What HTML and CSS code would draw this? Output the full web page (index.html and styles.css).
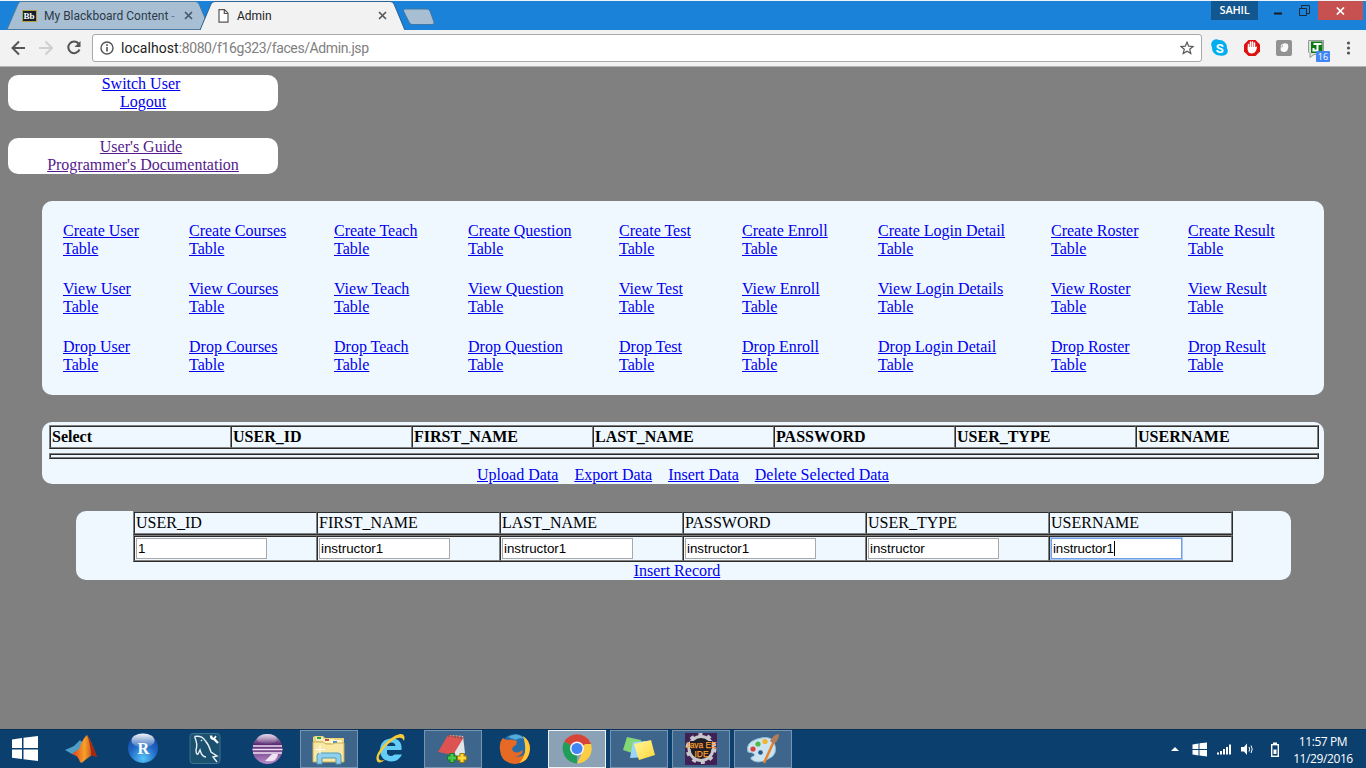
FILE: index.html
```html
<!DOCTYPE html>
<html lang="en">
<head>
<meta charset="utf-8">
<title>Admin</title>
<link rel="stylesheet" href="styles.css">
</head>
<body>
<header class="titlebar">
  <div class="tab tab-back">
    <svg class="tab-shape" width="200" height="29"><path d="M0 28.5 L11 3 Q12 .5 14 .5 H188 Q191 .5 192 3 L200 22 V28.5Z" fill="#a8bfd3" stroke="#4b7ba3"/></svg>
    <svg class="bb" width="15" height="12"><rect x=".5" y=".5" width="14" height="11" fill="#14202b" stroke="#b89d3e"/><text x="1.500" y="9" font-size="9" font-weight="700" font-family="Liberation Serif" fill="#fff">Bb</text></svg>
    <span class="tab-text">My Blackboard Content <i>-</i></span>
    <svg class="tab-x" width="9" height="9"><path d="M1 1 8 8M8 1 1 8" stroke="#46586a" stroke-width="1.7"/></svg>
  </div>
  <div class="tab tab-front">
    <svg class="tab-shape" width="206" height="30"><path d="M0 30 L11 3 Q12 .5 15 .5 H190 Q193 .5 194 3 L204 28 L206 30Z" fill="#f2f2f2"/><path d="M0 29 L11 3 Q12 .5 15 .5 H190 Q193 .5 194 3 L205 29" fill="none" stroke="#2d6597"/></svg>
    <svg class="doc" width="11" height="14"><path d="M1 .7H6.5L10 4.2V13.2H1ZM6.3 .7V4.5H10" fill="#fff" stroke="#555" stroke-width="1.2"/></svg>
    <span class="tab-text">Admin</span>
    <svg class="tab-x" width="9" height="9"><path d="M1 1 8 8M8 1 1 8" stroke="#5a5a5a" stroke-width="1.7"/></svg>
  </div>
  <svg class="newtab" width="34" height="18"><path d="M3 1H25Q27 1 28 3L32 14Q33 16.5 30 16.5H10Q8 16.5 7 14L1.500 3Q1 1 3 1Z" fill="#a8bfd3" stroke="#3d76a8"/></svg>
  <div class="winctl">
    <span class="profile">SAHIL</span>
    <svg class="min" width="9" height="3"><path d="M0 1.500H8" stroke="#1b1b1b" stroke-width="2"/></svg>
    <svg class="restore" width="11" height="11"><path d="M.5 3.500H7.500V10.500H.5ZM2.500 3V.5H10.500V8.500H8" fill="none" stroke="#1b2a38"/></svg>
    <span class="close"><svg width="9" height="8"><path d="M.8 .5 8 7.500M8 .5 .8 7.500" stroke="#fff" stroke-width="1.7"/></svg></span>
  </div>
</header>
<div class="toolbar">
  <svg class="nav" width="80" height="20"><g fill="none" stroke-width="2"><path d="M15 10H3M9 3.500 2.500 10 9 16.500" stroke="#555"/><path d="M29 10H41M35.500 3.500 42 10 35.500 16.500" stroke="#cfcfcf"/><path d="M68.500 5.500A5.800 5.800 0 1 0 69.500 11.500" stroke="#555"/></g><path d="M70.500 3V9H64.500Z" fill="#555"/></svg>
  <div class="address">
    <svg width="14" height="14"><circle cx="7" cy="7" r="6" fill="none" stroke="#555" stroke-width="1.400"/><path d="M7 6V10.500M7 3.300V5" stroke="#555" stroke-width="1.600"/></svg>
    <span class="url"><b>localhost</b>:8080/f16g323/faces/Admin.jsp</span>
    <svg class="star" width="14" height="14"><path d="M7 1.200 8.700 5.200 13 5.500 9.700 8.300 10.800 12.600 7 10.300 3.200 12.600 4.300 8.300 1 5.500 5.300 5.200Z" fill="none" stroke="#555" stroke-width="1.200"/></svg>
  </div>
  <svg class="ext" width="154" height="26">
    <path d="M3 5.500Q6 3.500 9 5A7.500 7.500 0 0 1 17 13Q19 17 16 19.500Q13 21.500 10 20.500A7.500 7.500 0 0 1 2 12.500Q0 8 3 5.500Z" fill="#00aff0"/><text x="5.800" y="17.500" font-size="13" font-weight="700" font-family="Roboto" fill="#fff">S</text>
    <path d="M38.500 5H45.500L50 9.500V16.500L45.500 21H38.500L34 16.500V9.500Z" fill="#de1010"/><path d="M38.500 15V9.500M40.500 14V7M42.500 14V7M44.500 15V8" stroke="#fff" stroke-width="1.500" stroke-linecap="round"/><path d="M37.800 12H45.300L47.200 11.500Q46 18.500 42 18.500Q37.800 18.500 37.800 14Z" fill="#fff"/>
    <rect x="66" y="5" width="16" height="16" rx="2" fill="#929292"/><path d="M71 10Q75 7 78 9.500Q79 14 76 16.500Q72 18 70.500 15Z" fill="#fafafa"/><path d="M70.500 12.500 73 9.500V12Z" fill="#b5b5b5"/>
    <path d="M98.500 5.500H113.500V19.500H104L100 22.500V18.500L98.500 17Z" fill="#ddd" stroke="#999"/><path d="M101 6.500H112.500V18H101Z" fill="#087b12"/><path d="M103.500 9H111.500M107.500 9V15.500H103.500V13" fill="none" stroke="#fff" stroke-width="2"/>
    <rect x="106" y="16" width="14" height="11" rx="1" fill="#4285f4"/><text x="107.800" y="25" font-size="9" font-family="Open Sans" fill="#fff">16</text>
    <g fill="#555"><circle cx="138.500" cy="8" r="1.600"/><circle cx="138.500" cy="13" r="1.600"/><circle cx="138.500" cy="18" r="1.600"/></g>
  </svg>
</div>
<main class="page">
  <nav class="pill"><div class="shift"><a>Switch User</a></div><div><a>Logout</a></div></nav>
  <nav class="pill visited"><div class="shift"><a>User's Guide</a></div><div><a>Programmer's Documentation</a></div></nav>
  <section class="card actions">
    <a>Create User<br>Table</a><a>Create Courses<br>Table</a><a>Create Teach<br>Table</a><a>Create Question<br>Table</a><a>Create Test<br>Table</a><a>Create Enroll<br>Table</a><a>Create Login Detail<br>Table</a><a>Create Roster<br>Table</a><a>Create Result<br>Table</a>
    <a>View User<br>Table</a><a>View Courses<br>Table</a><a>View Teach<br>Table</a><a>View Question<br>Table</a><a>View Test<br>Table</a><a>View Enroll<br>Table</a><a>View Login Details<br>Table</a><a>View Roster<br>Table</a><a>View Result<br>Table</a>
    <a>Drop User<br>Table</a><a>Drop Courses<br>Table</a><a>Drop Teach<br>Table</a><a>Drop Question<br>Table</a><a>Drop Test<br>Table</a><a>Drop Enroll<br>Table</a><a>Drop Login Detail<br>Table</a><a>Drop Roster<br>Table</a><a>Drop Result<br>Table</a>
  </section>
  <section class="card records">
    <div class="grid heads"><span>Select</span><span>USER_ID</span><span>FIRST_NAME</span><span>LAST_NAME</span><span>PASSWORD</span><span>USER_TYPE</span><span>USERNAME</span></div>
    <div class="grid empty"><span></span></div>
    <div class="links"><a>Upload Data</a><a>Export Data</a><a>Insert Data</a><a>Delete Selected Data</a></div>
  </section>
  <section class="card form">
    <div class="grid labels"><span>USER_ID</span><span>FIRST_NAME</span><span>LAST_NAME</span><span>PASSWORD</span><span>USER_TYPE</span><span>USERNAME</span></div>
    <div class="grid fields"><span><b>1</b></span><span><b>instructor1</b></span><span><b>instructor1</b></span><span><b>instructor1</b></span><span><b>instructor</b></span><span><b class="focus">instructor1</b></span></div>
    <div class="insert"><a>Insert Record</a></div>
  </section>
</main>
<footer class="taskbar">
  <svg class="apps" width="800" height="39">
    <defs>
      <radialGradient id="blue" cx=".5" cy=".85" r=".8"><stop offset="0" stop-color="#55c4f8"/><stop offset=".6" stop-color="#1f66c4"/><stop offset="1" stop-color="#1a4aa0"/></radialGradient>
      <linearGradient id="shine" x2="0" y2="1"><stop offset="0" stop-color="#fff" stop-opacity=".95"/><stop offset="1" stop-color="#fff" stop-opacity=".1"/></linearGradient>
      <linearGradient id="ml"><stop offset="0" stop-color="#e23b12"/><stop offset=".5" stop-color="#f6a12c"/><stop offset="1" stop-color="#b3260c"/></linearGradient>
      <linearGradient id="purple" x2="0" y2="1"><stop offset="0" stop-color="#c9b3d6"/><stop offset=".35" stop-color="#5a2a70"/><stop offset="1" stop-color="#b98ccc"/></linearGradient>
      <linearGradient id="note" x2="1" y2="1"><stop offset="0" stop-color="#fff69a"/><stop offset="1" stop-color="#ffd83a"/></linearGradient>
    </defs>
    <g class="running"><rect x="300.500" y="1.500" width="57" height="37"/><rect x="424.500" y="1.500" width="57" height="37"/><rect x="610.500" y="1.500" width="57" height="37"/><rect x="672.500" y="1.500" width="57" height="37"/><rect x="734.500" y="1.500" width="57" height="37"/></g>
    <rect class="active" x="548.500" y="1.500" width="57" height="37"/>
    <path d="M12 10.500 22 9V19H12ZM23.500 8.800 38 7V19H23.500ZM12 20.500H22V30L12 28.700ZM23.500 20.500H38V32L23.500 30.300Z" fill="#fff"/>
    <path d="M65 21 74 17 80 11 84 15 77 27 72 25Z" fill="#4d9fc7"/><path d="M72 25 79 20Q83 9 87 6Q91 11 97 28L92 26L85 31Q82 35 80 33Q78 26 72 25Z" fill="url(#ml)"/><path d="M87 6Q92 14 97 28L91 26Q91 16 87 6Z" fill="#a52910"/>
    <circle cx="143" cy="19" r="15" fill="url(#blue)"/><ellipse cx="143" cy="11.500" rx="11.500" ry="7" fill="url(#shine)"/><text x="137.500" y="24.500" font-size="16" font-weight="700" font-family="Liberation Serif" fill="#fff">R</text>
    <rect x="190" y="4.500" width="30" height="30" rx="3" fill="#1c506f" stroke="#3c7391"/><path d="M194.500 7.500Q202 6 205.500 12Q209 16 211 23L217 27L213 28L217 33M194.500 7.500Q198 15 196 21Q196 26 198 25L200 21Q202 28 206 28M201 11 202 12" fill="none" stroke="#e7f0f5" stroke-width="1.400"/><path d="M211 6.500Q211 10 214 10L218 14" fill="none" stroke="#fff" stroke-width="2.300"/><path d="M214 10 216 7" stroke="#fff" stroke-width="1.500"/>
    <circle cx="267.500" cy="20" r="15" fill="url(#purple)"/><path d="M253 17H282M252.500 20.500H282.500M253 24H282" stroke="#eee0f4" stroke-width="1.700"/><path d="M265 32Q277 34 278 25H272Z" fill="#efe5f2"/><ellipse cx="267" cy="10" rx="10" ry="5" fill="url(#shine)" opacity=".5"/>
    <g><path d="M313 10V8L315 7H323L325 9H344V32H313Z" fill="#ead37b"/><path d="M316 8H323V12H316Z" fill="#f5edbd"/><path d="M317 8H321V10H317Z" fill="#29a543"/><path d="M323 10H334V14H323Z" fill="#fff2bf"/><path d="M325 10H329V12H325Z" fill="#c94f3a"/><path d="M331 11H342V16H331Z" fill="#fff5cb"/><path d="M333 12H337V14H333Z" fill="#3f96d7"/><path d="M313 13H323L326 15H333L335 14H344V33H313Z" fill="#f8e8a4" stroke="#c8ae59"/><path d="M317 35V27Q317 24 320 24H338Q341 24 341 27V35H336V29H322V35Z" fill="#8fd0ed" stroke="#559bb8"/><path d="M320 16V25M315.500 20.500H325" stroke="#fff"/></g>
    <path d="M381 21H401.500Q402.500 9.500 391.500 9.500Q380.500 10 380 21Q380.500 32 391.500 32.500Q399 32 402 25.500H394.500Q390 29 387 24.500V21ZM387 17Q388 13.500 391.500 13.500Q395 13.500 395.500 17Z" fill="#62cdf7" fill-rule="evenodd"/><path d="M377 32Q374.500 27 382 18Q391 7 400 5Q406 4.500 404 12Q402 6.500 395 10Q386 15 380 25Q377 30 381 31.500Q384 31.500 386 30Q379 36 377 32Z" fill="#f6cb38"/>
    <path d="M449 6 463 7 465 24 456 28Z" fill="#dfe5e8"/><path d="M448 6 464 8 453 26 438 23Z" fill="#dc5352"/><path d="M449 5V8M452 5V8M455 6V9M458 6V9M461 7V10" stroke="#555"/><path d="M452 24V34M447 29H457" stroke="#197b24" stroke-width="5"/><path d="M452 25V33M448 29H456" stroke="#48ca49" stroke-width="3"/><path d="M462 24V34M457 29H467" stroke="#a77d00" stroke-width="5"/><path d="M462 25V33M458 29H466" stroke="#ffd83a" stroke-width="3"/>
    <circle cx="515" cy="19" r="14" fill="#246ba9"/><path d="M503 9Q506 12 511 10.500L517 12L516 16Q513 17 512 20Q514 25 519 23L523 21Q522 28 514 27Q524 30 527 20Q528 11 523 7Q530 11 530 20Q529 34 515 35Q501 34 500 21Q499 13 503 9Z" fill="#e66a24"/><path d="M523 7Q530 12 530 20Q529 32 519 34Q529 25 523 7Z" fill="#ffc834"/><path d="M508 8Q517 2 525 10Q518 8 516 11Z" fill="#55acd8"/>
    <g><path d="M577 20 564.300 12.500A15 15 0 0 1 590 12.500Z" fill="#d84437"/><path d="M577 20V34.500A15 15 0 0 1 564.300 12.500Z" fill="#1f9d59"/><path d="M577 20 590 12.500A15 15 0 0 1 577 34.500L583 22Z" fill="#ffcd42"/><path d="M570 13H590.300L591 15H577Z" fill="#d84437"/><circle cx="577" cy="19.500" r="7" fill="#f5f5f5"/><circle cx="577" cy="19.500" r="5.500" fill="#4285f4"/></g>
    <path d="M627 8 641 11 638 26 623 21Z" fill="#83d875"/><path d="M633 13 646 12 647 28 630 29Z" fill="#9bd5fa"/><path d="M634 15 651 11 655 26 639 31Z" fill="url(#note)"/>
    <rect x="685" y="4" width="32" height="32" fill="#402153"/><circle cx="701" cy="19.500" r="12" fill="#211d25" stroke="#c7c7cc" stroke-width="3"/><circle cx="701" cy="19.500" r="14" fill="none" stroke="#c7c7cc" stroke-width="3" stroke-dasharray="4 5"/><path d="M690 12H712V20H690ZM695 20H708V28H695Z" fill="#211d25"/><g font-family="Liberation Sans" font-size="9.500" fill="#ff9d2e" stroke="#ff9d2e" stroke-width=".25"><text x="685.500" y="19" textLength="31" lengthAdjust="spacingAndGlyphs">Java EE</text><text x="694.500" y="28" textLength="14" lengthAdjust="spacingAndGlyphs">IDE</text></g>
    <path d="M748 23Q745 14 757 10Q770 6 774 13Q779 26 768 30Q757 36 751 30Q750 28 754 27Q756 24 748 23Z" fill="#cce4f1" stroke="#93bed5"/><circle cx="753" cy="20" r="2.600" fill="#d94338"/><circle cx="758" cy="15" r="2.600" fill="#4fba48"/><circle cx="765" cy="12.500" r="2.600" fill="#f2b42b"/><circle cx="760.500" cy="23.500" r="2.300" fill="#255887"/><path d="M774 12 764 34" stroke="#e7832c" stroke-width="2.500"/><path d="M770 12Q774 5 779 5Q779 11 774 15Z" fill="#b47c58"/>
  </svg>
  <div class="tray">
    <svg width="86" height="18"><path d="M1 11 5 7 9 11Z" fill="#fff"/><path d="M22.500 4.500 28.500 3.500V9H22.500ZM29.500 3.300 37 2.500V9H29.500ZM22.500 10H28.500V15.500L22.500 14.500ZM29.500 10H37V16.500L29.500 15.600Z" fill="#fff"/><path d="M48 14.500V12.500M51 14.500V11M54 14.500V9M57 14.500V7M60 14.500V4.500" stroke="#fff" stroke-width="2"/><path d="M71 7H74L77 3.500V15L74 11.500H71Z" fill="#fff"/><path d="M79 7Q80.500 9 79 11.500M81 5.500Q83.500 9 81 13" fill="none" stroke="#fff"/></svg>
    <svg width="10" height="18"><rect x="1.700" y="4.700" width="6.600" height="11.600" fill="none" stroke="#fff" stroke-width="1.400"/><path d="M3 3.500H7" stroke="#fff" stroke-width="2"/><path d="M3.500 9.500H6.500V14H3.500Z" fill="#fff"/></svg>
    <div class="clock"><div>11:57 PM</div><div>11/29/2016</div></div>
  </div>
</footer>
</body>
</html>
```
FILE: styles.css
```css
* { box-sizing: border-box; }
body { margin: 0; width: 1366px; height: 768px; overflow: hidden; display: flex; flex-direction: column; background: #808080; font: 16px/18px "Liberation Serif", serif; }
svg { display: block; flex: none; }

.titlebar { height: 30px; flex: none; display: flex; align-items: flex-start; background: #1a83d9; border-top: 1px solid #eef3f7; padding-left: 7px; font: 12px/29px Roboto, sans-serif; }
.tab { position: relative; height: 29px; display: flex; align-items: center; flex: none; }
.tab-shape { position: absolute; left: 0; top: 0; }
.tab > :not(.tab-shape) { position: relative; }
.tab-back { width: 193px; padding-left: 15px; color: #2c3a48; }
.tab-back .tab-text { margin-left: 7px; width: 133px; white-space: nowrap; }
.tab-back i { font-style: normal; opacity: .5; }
.tab-back .tab-x { margin-left: 7px; }
.tab-front { width: 206px; padding-left: 18px; color: #222; z-index: 1; }
.tab-front .tab-text { margin-left: 8px; width: 141px; }
.tab-text { padding-top: 2px; }
.newtab { margin: 7px 0 0 -4px; }
.winctl { margin-left: auto; display: flex; height: 20px; }
.profile { width: 47px; height: 19px; background: #12578f; color: #fff; font: 600 11px/18px "Open Sans", sans-serif; text-align: center; letter-spacing: -.2px; }
.min { margin: 11px 0 0 16px; }
.restore { margin: 4px 0 0 16px; }
.close { margin: 0 3px 0 8px; width: 45px; height: 19px; background: #c75050; display: flex; align-items: center; justify-content: center; }

.toolbar { height: 37px; flex: none; display: flex; align-items: center; background: #f2f2f2; border-bottom: 1px solid #b4b4b4; padding-left: 10px; }
.nav { margin-right: 2px; }
.address { width: 1110px; height: 28px; display: flex; align-items: center; background: #fff; border: 1px solid #a9a9a9; border-radius: 3px; padding: 0 7px; }
.url { margin-left: 7px; font: 14px/26px Roboto, sans-serif; color: #808080; letter-spacing: -.39px; }
.url b { font-weight: 400; color: #222; letter-spacing: .05px; }
.star { margin-left: auto; }
.ext { margin-left: 8px; overflow: visible; }

.page { flex: 1; padding-top: 8px; }
a { color: #00e; text-decoration: underline; }
.pill { margin: 0 0 27px 8px; width: 270px; height: 36px; background: #fff; border-radius: 10px; text-align: center; }
.pill .shift { padding-right: 4px; }
.visited a { color: #551a8b; }
.card { background: #f0f8ff; border-radius: 10px; margin: 0 42px 27px; }
.actions { height: 194px; padding: 21px 0 0 21px; display: grid; grid-template-columns: 126px 145px 134px 151px 123px 136px 173px 137px 1fr; grid-auto-rows: 36px; row-gap: 22px; align-content: start; }
.records { height: 62px; padding: 3px 5px 0 7px; }
.grid { display: grid; border: 1px solid; border-color: #808080 #2c2c2c #2c2c2c #808080; }
.grid > span { border: 1px solid; border-color: #2c2c2c #808080 #808080 #2c2c2c; padding-left: 1px; }
.heads { grid-template: 22px / repeat(6, 181px) 1fr; height: 24px; font-weight: 700; line-height: 19px; }
.empty { height: 6px; margin-top: 4px; }
.links { display: flex; justify-content: center; gap: 16px; margin-top: 7px; padding-right: 2px; }
.form { height: 69px; margin: 0 75px 0 76px; padding: 0 58px 0 57px; }
.labels, .fields { grid-template-columns: repeat(6, 1fr); }
.labels { height: 24px; grid-template-rows: 22px; line-height: 19px; }
.fields { height: 27px; }
.fields b { display: block; width: 131px; height: 21px; margin-top: 1px; background: #fff; border: 1px solid #a9a9a9; padding-left: 1px; font: 13.33px/20px "Liberation Sans", sans-serif; }
.fields .focus { border-color: #6f9fe8; box-shadow: 0 0 0 1px #a9c8f3; letter-spacing: -.12px; }
.focus::after { content: ""; display: inline-block; width: 1px; height: 15px; background: #000; vertical-align: -3px; }
.insert { text-align: center; padding-right: 12px; }

.taskbar { height: 39px; flex: none; display: flex; background: #0b3f6d; border-top: 1px solid #0a3157; }
.apps { margin-top: -1px; }
.running rect { fill: #3e658b; stroke: #7795b1; }
.active { fill: #8ba1b5; stroke: #edf2f6; }
.tray { margin-left: auto; width: 196px; display: flex; align-items: center; }
.tray svg + svg { margin-left: 14px; }
.clock { flex: 1; margin-left: 0; padding-top: 1px; color: #fff; font: 12px/17px "Open Sans", sans-serif; text-align: center; letter-spacing: -.4px; }
```
